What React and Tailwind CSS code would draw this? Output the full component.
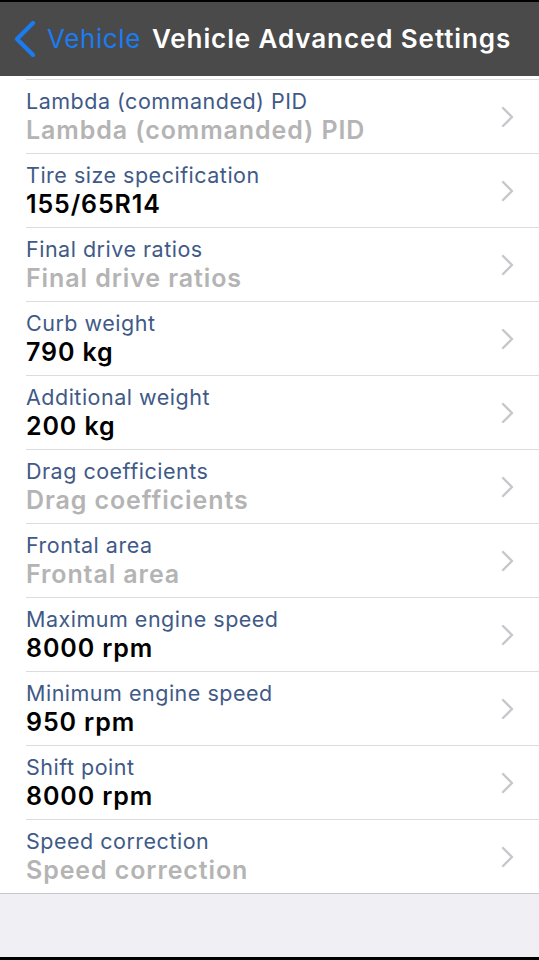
const rows = [
  { label: 'Lambda (commanded) PID', value: 'Lambda (commanded) PID', empty: true },
  { label: 'Tire size specification', value: '155/65R14' },
  { label: 'Final drive ratios', value: 'Final drive ratios', empty: true },
  { label: 'Curb weight', value: '790 kg' },
  { label: 'Additional weight', value: '200 kg' },
  { label: 'Drag coefficients', value: 'Drag coefficients', empty: true },
  { label: 'Frontal area', value: 'Frontal area', empty: true },
  { label: 'Maximum engine speed', value: '8000 rpm' },
  { label: 'Minimum engine speed', value: '950 rpm' },
  { label: 'Shift point', value: '8000 rpm' },
  { label: 'Speed correction', value: 'Speed correction', empty: true },
]

const BackChevron = () => (
  <svg width="22" height="36" viewBox="0 0 22 36" className="ml-[14px] mr-[11px]">
    <polyline points="19,2 3,18 19,34" fill="none" stroke="#1a7cf0" strokeWidth="4.2" strokeLinecap="round" strokeLinejoin="round" />
  </svg>
)

const Disclosure = () => (
  <svg width="13" height="22" viewBox="0 0 13 22">
    <polyline points="2,2 11,11 2,20" fill="none" stroke="#c7c7cc" strokeWidth="2.4" strokeLinecap="round" strokeLinejoin="round" />
  </svg>
)

const App = () => {
  return (
    <div className="w-[539px] h-[960px] flex flex-col bg-[#efeff4] font-['Inter','Liberation_Sans',sans-serif] overflow-hidden">
      {/* NAV BAR */}
      <header className="h-[76px] shrink-0 bg-[#4a4a4a] border-t-2 border-black flex items-center">
        <BackChevron />
        <span className="text-[#1a7cf0] text-[26px] tracking-[0.6px] leading-none">Vehicle</span>
        <span className="text-white text-[26px] tracking-[0.9px] font-semibold leading-none ml-[11px]">Vehicle Advanced Settings</span>
      </header>

      {/* SETTINGS LIST */}
      <div className="bg-white pt-[3px] border-b border-[#c8c7cc]">
        {rows.map((row, i) => (
          <div key={i} className="pl-[26px]">
            <div className="h-[74px] border-t border-[#dcdcdc] flex items-center pr-[25px]">
              <div className="flex-1 flex flex-col">
                <span className="text-[#3f5a87] text-[21.5px] tracking-[0.5px] leading-[26px]">{row.label}</span>
                <span className={`text-[25px] tracking-[0.9px] font-semibold leading-[32px] ${row.empty ? 'text-[#b4b4b4]' : 'text-black'}`}>
                  {row.value}
                </span>
              </div>
              <Disclosure />
            </div>
          </div>
        ))}
      </div>

      <div className="flex-1" />
      <div className="h-[3px] bg-black" />
    </div>
  )
}

export default App
